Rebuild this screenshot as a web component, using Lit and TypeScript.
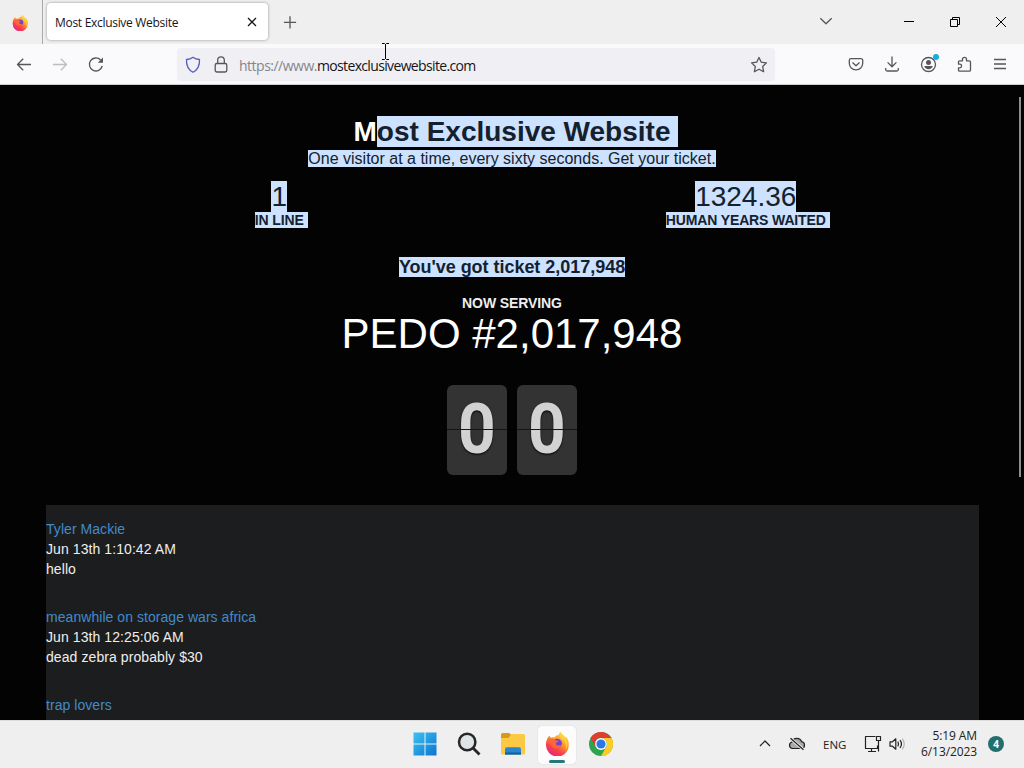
import { LitElement, html, svg, css, nothing } from 'lit';
import { property, customElement } from 'lit/decorators.js';

interface Message {
  author: string;
  time?: string;
  text?: string;
}

const MESSAGES: Message[] = [
  { author: 'Tyler Mackie', time: 'Jun 13th 1:10:42 AM', text: 'hello' },
  {
    author: 'meanwhile on storage wars africa',
    time: 'Jun 13th 12:25:06 AM',
    text: 'dead zebra probably $30',
  },
  { author: 'trap lovers' },
];

const ICONS = {
  back: svg`<path d="M19 12.500H5.500M11.200 6.800l-5.700 5.700 5.700 5.700"/>`,
  forward: svg`<path d="M5 12.500h13.500M12.800 6.800l5.700 5.700-5.700 5.700"/>`,
  reload: svg`<path d="M18.200 14a6.500 6.500 0 1 1-1.600-6"/><path d="M19 5.500v5.200h-5.200z" fill="currentColor" stroke="none"/>`,
  shield: svg`<path d="M12 4.300c1.800 1.400 4 2.100 6.500 2.200.3 5.500-1.300 10-6.500 12.800-5.200-2.800-6.800-7.300-6.500-12.800 2.500-.1 4.700-.8 6.500-2.200z"/>`,
  lock: svg`<rect x="6.200" y="10.500" width="11.600" height="8.500" rx="1.700"/><path d="M8.700 10.500V7.100a3.300 3.300 0 0 1 6.600 0v3.400"/>`,
  star: svg`<path d="M12 4.500l2.300 4.700 5.100.7-3.700 3.600.9 5.200-4.600-2.500-4.600 2.500.9-5.200-3.700-3.600 5.100-.7z"/>`,
  pocket: svg`<path d="M7 6.600h10a1.700 1.700 0 0 1 1.700 1.700v2.900a6.700 6.700 0 0 1-13.400 0V8.300A1.700 1.700 0 0 1 7 6.600zM8.500 10.600l3.500 3.200 3.500-3.200"/>`,
  download: svg`<path d="M12 4.500v10M7.600 10.400L12 14.800l4.400-4.400M5.700 16v1.500a1.500 1.500 0 0 0 1.500 1.500h9.600a1.500 1.500 0 0 0 1.500-1.500V16"/>`,
  account: svg`<circle cx="12.500" cy="12.500" r="7"/><circle cx="12.500" cy="10.400" r="2.500" fill="currentColor" stroke="none"/><path d="M8.300 14h8.400c-.2 2-2 3.200-4.200 3.200S8.500 16 8.300 14z" fill="currentColor" stroke="none"/>`,
  puzzle: svg`<path d="M6.500 11.200V9.800q0-1 1-1h3V7.300a2 2 0 0 1 4 0v1.500h2.800q1.200 0 1.200 1.200v8q0 1.200-1.200 1.200H7.500q-1 0-1-1v-2.400h1.300a1.800 1.800 0 0 0 0-3.600H6.500z"/>`,
  menu: svg`<path d="M6 7.500h12M6 12h12M6 16.500h12"/>`,
  close: svg`<path d="M8 8l8 8M16 8l-8 8"/>`,
  plus: svg`<path d="M12 6.200v12.200M5.900 12.300h12.200"/>`,
  chevronDown: svg`<path d="M6.300 9.200l5.700 5.600 5.700-5.600"/>`,
  chevronUp: svg`<path d="M7 14l5-5 5 5"/>`,
  minimize: svg`<path d="M7 11.500h10"/>`,
  restore: svg`<path d="M7.500 9.500h7v7h-7zM9.500 9.500v-2h7v7h-2"/>`,
  windowClose: svg`<path d="M7 7l10 10M17 7L7 17"/>`,
  cloud: svg`<path d="M7.500 16.500a3.300 3.300 0 0 1-.4-6.500 5 5 0 0 1 9.500-.3 3.500 3.500 0 0 1 .4 6.800z" fill="#a9a9a9"/><path d="M5.500 6.300l13 11.400" stroke="#eee" stroke-width="3"/><path d="M5.500 6.300l13 11.400"/>`,
  monitor: svg`<path d="M14.500 4.500H4.500v12h12v-3M10.500 16.500v3M7 19.500h8"/><path d="M15.500 4.500h4v4h-4zM17.500 8.500v11"/>`,
  speaker: svg`<path d="M5 9.800h2.500l3.300-3v10.400l-3.300-3H5z"/><path d="M12.800 9.700q1.500 2.300 0 4.600M15 8.200q3 3.800 0 7.600"/><path d="M17.200 6.700q4.200 5.300 0 10.600" stroke="#b5b5b5"/>`,
};

const FIREFOX = svg`
  <defs>
    <linearGradient id="flame" x1=".8" y1="0" x2=".2" y2="1">
      <stop offset="0" stop-color="#ffe04a"/>
      <stop offset=".4" stop-color="#ff9a25"/>
      <stop offset=".7" stop-color="#fb3d4d"/>
      <stop offset="1" stop-color="#e21f86"/>
    </linearGradient>
  </defs>
  <path d="M4.500 3.500c.2 1 .8 1.700 1.600 2.200q1.600-.6 3.200-.2C10.500 3.800 12.300 3 13.500 3c.6-1.200 1-2.200 2-3 1 2.200 3.200 3.400 4.600 5.200.4.200.7-.2.7-.7 2.300 2.600 3.300 5.600 2.900 9A11.200 11.200 0 0 1 1 12.900C.8 9.400 2.200 5.800 4.500 3.500z" fill="url(#flame)"/>
  <path d="M15.500 0c1 2.200 3.200 3.400 4.600 5.200 3 4 3.200 9.300.4 13.200 1.100-5.700-.5-9.300-4-11.400-2.400-1.500-2.400-4.700-1-7z" fill="#ffd43c" opacity=".75"/>
  <circle cx="12.200" cy="11.500" r="4.700" fill="#7241d8"/>
  <path d="M3.800 8c2.500-1.800 5.400-1.300 7.400.5l2.600.3c-.2 1.200-2.400 1.400-2.900 2.200-.3 1.500.7 2.400 2 2.400 1.300.1 2.100-.8 3.300-.2-1 2.600-3.400 3.900-6.100 3.100C5.800 15.100 4.400 11.900 3.800 8z" fill="#ff6538"/>`;

const WINDOWS = svg`
  <defs>
    <linearGradient id="pane" x1="0" y1="0" x2="1" y2="1">
      <stop offset="0" stop-color="#3cc3f3"/>
      <stop offset="1" stop-color="#0b74cf"/>
    </linearGradient>
  </defs>
  <path d="M.5.500h11v11H.5zM12.500.500h11v11h-11zM.5 12.500h11v11H.5zM12.500 12.500h11v11h-11z" fill="url(#pane)"/>`;

const SEARCH = svg`
  <circle cx="10.200" cy="10" r="8.200" fill="#dfe4e6" stroke="#272727" stroke-width="2.500"/>
  <path d="M16 16l6.500 6.500" stroke="#272727" stroke-width="2.800"/>`;

const FOLDER = svg`
  <path d="M0 2.500Q0 1 1.500 1h6.700l2.600 2.500-2.600 3H0z" fill="#d99a12"/>
  <path d="M0 6h7.500l3-4h12Q24 2 24 3.500V21q0 1.500-1.500 1.500h-21Q0 22.500 0 21z" fill="#fbc943"/>
  <path d="M4 22.500v-5.300q0-2 2-2h12q2 0 2 2v5.300z" fill="#2b86cf"/>
  <path d="M4 20.500h16v2H4z" fill="#0f5fa6"/>`;

const CHROME = svg`
  <circle cx="12" cy="12" r="12" fill="#2ea44f"/>
  <path d="M1.600 6A12 12 0 0 1 22.400 6H12a6 6 0 0 0-5.200 9z" fill="#de3d30"/>
  <path d="M22.400 6A12 12 0 0 1 12 24l5.200-9A6 6 0 0 0 12 6z" fill="#fdcb22"/>
  <circle cx="12" cy="12" r="5.900" fill="#fff"/>
  <circle cx="12" cy="12" r="4.600" fill="#2d76e8"/>`;

const glyph = (name: keyof typeof ICONS) => html`
  <svg
    class="glyph"
    width="24"
    height="24"
    viewBox="0 0 24 24"
    fill="none"
    stroke="currentColor"
    stroke-width="1.300"
    stroke-linejoin="round"
  >
    ${ICONS[name]}
  </svg>
`;

const logo = (content: unknown, size = 24) => html`
  <svg class="logo" width=${size} height=${size} viewBox="0 0 24 24" fill="none">
    ${content}
  </svg>
`;

const iconStyles = css`
  svg {
    display: block;
    flex: none;
  }
`;

@customElement('browser-chrome')
export class BrowserChrome extends LitElement {
  static override styles = [
    iconStyles,
    css`
      :host {
        display: block;
        font-family: 'Open Sans', sans-serif;
        color: #55555b;
      }

      .tabs {
        display: flex;
        height: 44px;
        box-sizing: border-box;
        background: #efefef;
      }

      .pinned {
        width: 43px;
        box-sizing: border-box;
        border-right: 1px solid #a9a9ac;
        padding: 15px 0 0 12px;
      }

      .tab {
        display: flex;
        align-items: center;
        width: 221px;
        height: 37px;
        margin: 3px 0 0 4px;
        box-sizing: border-box;
        padding: 0 4px 0 8px;
        border-radius: 4px;
        background: #fff;
        box-shadow: 0 0 3px rgba(0, 0, 0, 0.4);
        color: #15141a;
        font-size: 12px;
      }

      .tab-title {
        flex: 1;
        margin-top: 2px;
        white-space: nowrap;
        letter-spacing: -0.3px;
      }

      .new-tab {
        margin: 10px auto 0 10px;
      }

      .list {
        margin: 9px 59px 0 0;
      }

      .window {
        display: flex;
        gap: 22px;
        padding: 10px 11px 0 0;
        color: #000;
      }

      .window svg {
        stroke-width: 1;
      }

      .toolbar {
        display: flex;
        height: 41px;
        box-sizing: border-box;
        border-bottom: 1px solid #cfcfd2;
        background: #fafafc;
      }

      .nav {
        display: flex;
        gap: 12px;
        width: 177px;
        box-sizing: border-box;
        padding: 8px 0 0 12px;
      }

      .disabled {
        color: #bcbcc2;
      }

      .url {
        display: flex;
        align-items: center;
        width: 598px;
        height: 33px;
        margin-top: 4px;
        box-sizing: border-box;
        padding: 0 4px;
        border-radius: 4px;
        background: #f0f0f4;
      }

      .shield {
        color: #5a5cc0;
      }

      .lock {
        margin-left: 4px;
      }

      .address {
        flex: 1;
        margin: 1px 0 0 6px;
        font-size: 14px;
        letter-spacing: -0.5px;
        white-space: nowrap;
        color: #85858c;
      }

      .host {
        color: #15141a;
        letter-spacing: -0.65px;
      }

      .actions {
        display: flex;
        gap: 12px;
        margin-left: auto;
        padding: 8px 12px 0 0;
      }

      .account {
        position: relative;
        height: 24px;
      }

      .dot {
        position: absolute;
        left: 17px;
        top: 2px;
        width: 6px;
        height: 6px;
        border-radius: 50%;
        background: #14aede;
      }
    `,
  ];

  override render() {
    return html`
      <div class="tabs">
        <div class="pinned">${logo(FIREFOX, 16)}</div>
        <div class="tab">
          <span class="tab-title">Most Exclusive Website</span>
          ${glyph('close')}
        </div>
        <div class="new-tab">${glyph('plus')}</div>
        <div class="list">${glyph('chevronDown')}</div>
        <div class="window">
          ${glyph('minimize')} ${glyph('restore')} ${glyph('windowClose')}
        </div>
      </div>
      <div class="toolbar">
        <div class="nav">
          ${glyph('back')}
          <span class="disabled">${glyph('forward')}</span>
          ${glyph('reload')}
        </div>
        <div class="url">
          <span class="shield">${glyph('shield')}</span>
          <span class="lock">${glyph('lock')}</span>
          <span class="address"
            >https://www.<span class="host">mostexclusivewebsite.com</span></span
          >
          ${glyph('star')}
        </div>
        <div class="actions">
          ${glyph('pocket')} ${glyph('download')}
          <div class="account">
            ${glyph('account')}
            <span class="dot"></span>
          </div>
          ${glyph('puzzle')} ${glyph('menu')}
        </div>
      </div>
    `;
  }
}

@customElement('flip-digit')
export class FlipDigit extends LitElement {
  static override styles = css`
    :host {
      display: block;
      position: relative;
      width: 60px;
      height: 90px;
      border-radius: 6px;
      background: #333;
      color: #d2d2d2;
      font: bold 70px/88px Roboto, sans-serif;
      text-align: center;
      text-shadow: 0 1px 2px #000;
    }

    .value {
      display: block;
      transform: scaleX(0.94);
    }

    .hinge {
      position: absolute;
      left: 0;
      top: 44px;
      width: 100%;
      height: 1px;
      background: #161616;
    }
  `;

  @property({ type: String })
  value = '0';

  override render() {
    return html`
      <span class="value">${this.value}</span>
      <span class="hinge"></span>
    `;
  }
}

@customElement('exclusive-page')
export class ExclusivePage extends LitElement {
  static override styles = css`
    :host {
      display: block;
      position: relative;
      overflow: hidden;
      box-sizing: border-box;
      padding: 31px 46px 0;
      background: #030303;
      color: #fff;
      font: 14px/20px 'Liberation Sans', Arial, sans-serif;
      text-align: center;
    }

    .selected {
      background: #cce2ff;
      color: #14212d;
    }

    /* Selected line break at the end of a block */
    .break {
      padding-right: var(--break, 4px);
      margin-right: calc(-1 * var(--break, 4px));
    }

    .title {
      --break: 8px;
      margin: 0;
      font-size: 28px;
      line-height: 31px;
    }

    .tagline {
      margin-top: 2px;
      font-size: 16px;
      line-height: 20px;
    }

    .stats {
      display: grid;
      grid-template-columns: 1fr 1fr;
      margin: 12px -1px 0 0;
    }

    .amount {
      font-size: 28px;
      line-height: 31px;
    }

    .label {
      font-weight: bold;
      line-height: 16px;
      letter-spacing: -0.13px;
    }

    .ticket {
      margin-top: 29px;
      font-size: 18px;
      font-weight: bold;
      line-height: 20px;
      letter-spacing: -0.03px;
    }

    .caption {
      margin-top: 16px;
      color: #eee;
      font-weight: bold;
      letter-spacing: -0.1px;
    }

    .serving {
      font-size: 42px;
      line-height: 42px;
    }

    .clock {
      display: flex;
      justify-content: center;
      gap: 10px;
      margin-top: 30px;
    }

    .chat {
      height: 240px;
      margin: 30px -1px 0 0;
      box-sizing: border-box;
      padding-top: 14px;
      background: #1c1d1e;
      color: #eee;
      text-align: left;
      letter-spacing: 0.08px;
    }

    .message {
      margin-bottom: 28px;
    }

    .author {
      color: #428bca;
      letter-spacing: 0.05px;
    }

    .scrollbar {
      position: absolute;
      right: 3px;
      top: 12px;
      width: 2px;
      height: 380px;
      background: #8f8f8f;
    }
  `;

  private renderMessage(message: Message) {
    return html`
      <div class="message">
        <div class="author">${message.author}</div>
        ${message.time ? html`<div>${message.time}</div>` : nothing}
        ${message.text ? html`<div>${message.text}</div>` : nothing}
      </div>
    `;
  }

  override render() {
    return html`
      <h1 class="title">M<span class="selected break">ost Exclusive Website</span></h1>
      <div class="tagline">
        <span class="selected"
          >One visitor at a time, every sixty seconds. Get your ticket.</span
        >
      </div>
      <div class="stats">
        <div>
          <div class="amount"><span class="selected">1</span></div>
          <div class="label"><span class="selected break">IN LINE</span></div>
        </div>
        <div>
          <div class="amount"><span class="selected">1324.36</span></div>
          <div class="label">
            <span class="selected break">HUMAN YEARS WAITED</span>
          </div>
        </div>
      </div>
      <div class="ticket">
        <span class="selected">You've got ticket 2,017,948</span>
      </div>
      <div class="caption">NOW SERVING</div>
      <div class="serving">PEDO #2,017,948</div>
      <div class="clock">
        <flip-digit value="0"></flip-digit>
        <flip-digit value="0"></flip-digit>
      </div>
      <div class="chat">${MESSAGES.map((m) => this.renderMessage(m))}</div>
      <div class="scrollbar"></div>
    `;
  }
}

@customElement('task-bar')
export class TaskBar extends LitElement {
  static override styles = [
    iconStyles,
    css`
      :host {
        display: flex;
        box-sizing: border-box;
        height: 48px;
        border-top: 1px solid #dcdcdc;
        background: #efefef;
        color: #222;
        font: 12px/16px 'Open Sans', sans-serif;
      }

      .apps {
        display: flex;
        gap: 6px;
        margin-left: 406px;
        padding-top: 5px;
      }

      .app {
        display: flex;
        flex-direction: column;
        align-items: center;
        width: 38px;
        height: 38px;
        box-sizing: border-box;
        padding-top: 6px;
        border-radius: 4px;
      }

      .active {
        background: #fcfcfc;
        box-shadow: 0 0 1px #bbb;
      }

      .active::after {
        content: '';
        width: 16px;
        height: 3px;
        margin-top: 4px;
        border-radius: 2px;
        background: #24777a;
      }

      .tray {
        display: flex;
        align-items: center;
        margin-left: auto;
        padding: 0 20px 1px 0;
      }

      .tray svg {
        stroke-width: 1.2;
      }

      .cloud {
        margin-left: 8px;
      }

      .lang {
        width: 24px;
        margin: 2px 14px 0;
        font-size: 11.5px;
      }

      .clock {
        width: 68px;
        margin-right: 11px;
        text-align: right;
        letter-spacing: -0.1px;
        white-space: nowrap;
      }

      .badge {
        width: 16px;
        height: 16px;
        border-radius: 50%;
        background: #226f70;
        color: #fff;
        font-size: 10px;
        font-weight: bold;
        text-align: center;
      }
    `,
  ];

  override render() {
    return html`
      <div class="apps">
        <div class="app">${logo(WINDOWS)}</div>
        <div class="app">${logo(SEARCH)}</div>
        <div class="app">${logo(FOLDER)}</div>
        <div class="app active">${logo(FIREFOX)}</div>
        <div class="app">${logo(CHROME)}</div>
      </div>
      <div class="tray">
        ${glyph('chevronUp')}
        <span class="cloud">${glyph('cloud')}</span>
        <span class="lang">ENG</span>
        ${glyph('monitor')} ${glyph('speaker')}
        <div class="clock">
          <div>5:19 AM</div>
          <div>6/13/2023</div>
        </div>
        <div class="badge">4</div>
      </div>
    `;
  }
}

@customElement('app-root')
export class AppRoot extends LitElement {
  static override styles = css`
    :host {
      display: grid;
      grid-template-rows: 85px 1fr 48px;
      position: relative;
      width: 1024px;
      height: 768px;
      overflow: hidden;
    }

    .pointer {
      position: absolute;
      left: 381px;
      top: 43px;
    }
  `;

  override render() {
    return html`
      <browser-chrome></browser-chrome>
      <exclusive-page></exclusive-page>
      <task-bar></task-bar>
      <svg class="pointer" width="9" height="17" fill="none" stroke="#000">
        <path d="M1 .5h2.500l1 1 1-1H8M4.500 1v15M1 16.500h2.500l1-1 1 1H8" />
      </svg>
    `;
  }
}

declare global {
  interface HTMLElementTagNameMap {
    'app-root': AppRoot;
    'browser-chrome': BrowserChrome;
    'exclusive-page': ExclusivePage;
    'flip-digit': FlipDigit;
    'task-bar': TaskBar;
  }
}
